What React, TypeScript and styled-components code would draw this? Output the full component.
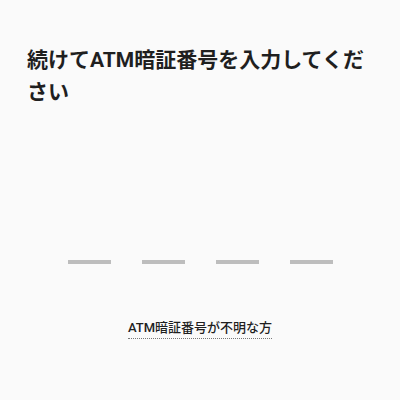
import React from 'react'
import styled, { createGlobalStyle } from 'styled-components'

const GlobalStyle = createGlobalStyle`
  html, body {
    margin: 0;
    padding: 0;
    background: #fafafa;
  }
  body {
    font-family: Roboto, "Noto Sans CJK JP", sans-serif;
    color: #1f1f1f;
  }
`

const Screen = styled.main`
  box-sizing: border-box;
  width: 400px;
  height: 400px;
  padding: 44px 27px 0;
  display: flex;
  flex-direction: column;
  background: #fafafa;
`

const Title = styled.h1`
  margin: 0;
  font-size: 21px;
  line-height: 32px;
  font-weight: 700;
  letter-spacing: 0;
`

const PinRow = styled.div`
  display: flex;
  justify-content: center;
  gap: 31px;
  margin-top: 152px;
`

const PinSlot = styled.span<{ $filled?: boolean }>`
  display: block;
  width: 43px;
  height: 4px;
  background: ${({ $filled }) => ($filled ? '#333' : '#bdbdbd')};
`

const HelpLink = styled.a`
  align-self: center;
  margin-top: 55px;
  padding-bottom: 1px;
  font-size: 13px;
  line-height: 18px;
  font-weight: 500;
  color: #1f1f1f;
  text-decoration: none;
  border-bottom: 1px dotted #777;
  cursor: pointer;
`

const PIN_LENGTH = 4

const App = () => {
  return (
    <>
      <GlobalStyle />
      <Screen>
        <Title>続けてATM暗証番号を入力してください</Title>
        <PinRow>
          {Array.from({ length: PIN_LENGTH }).map((_, i) => (
            <PinSlot key={i} />
          ))}
        </PinRow>
        <HelpLink>ATM暗証番号が不明な方</HelpLink>
      </Screen>
    </>
  )
}

export default App
